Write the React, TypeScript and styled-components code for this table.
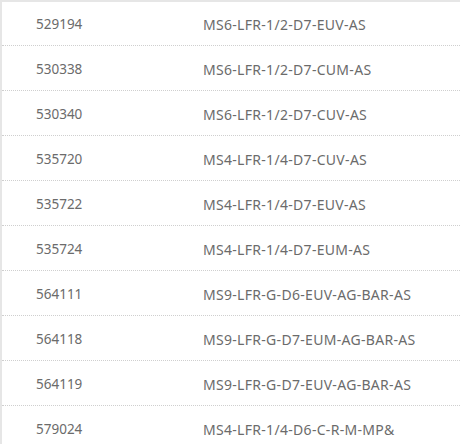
import React from "react";
import styled, { createGlobalStyle } from "styled-components";

const Global = createGlobalStyle`
  html, body { margin: 0; padding: 0; background: #fff; }
  body { font-family: "Noto Sans", "Open Sans", sans-serif; }
`;

const Panel = styled.div`
  width: 460px;
  height: 444px;
  overflow: hidden;
  border-top: 2px solid #e6e6e6;
  border-left: 2px solid #e6e6e6;
  box-sizing: border-box;
  background: #fff;
`;

const Row = styled.div`
  display: grid;
  grid-template-columns: 201px 1fr;
  height: 45px;
  padding-top: 3px;
  align-items: center;
  border-bottom: 1px dotted #cfcfcf;
  box-sizing: border-box;
  &:first-child { height: 44px; }
`;

const IdCell = styled.div`
  padding-left: 34px;
  font-size: 13.5px;
  color: #6b6b6b;
  white-space: nowrap;
  line-height: 1;
`;

const CodeCell = styled.div`
  font-size: 14px;
  letter-spacing: 0.3px;
  color: #6b6b6b;
  white-space: nowrap;
  line-height: 1;
`;

const rows: [string, string][] = [
  ["529194", "MS6-LFR-1/2-D7-EUV-AS"],
  ["530338", "MS6-LFR-1/2-D7-CUM-AS"],
  ["530340", "MS6-LFR-1/2-D7-CUV-AS"],
  ["535720", "MS4-LFR-1/4-D7-CUV-AS"],
  ["535722", "MS4-LFR-1/4-D7-EUV-AS"],
  ["535724", "MS4-LFR-1/4-D7-EUM-AS"],
  ["564111", "MS9-LFR-G-D6-EUV-AG-BAR-AS"],
  ["564118", "MS9-LFR-G-D7-EUM-AG-BAR-AS"],
  ["564119", "MS9-LFR-G-D7-EUV-AG-BAR-AS"],
  ["579024", "MS4-LFR-1/4-D6-C-R-M-MP&"],
];

export default function App() {
  return (
    <>
      <Global />
      <Panel>
        {rows.map(([id, code]) => (
          <Row key={id}>
            <IdCell>{id}</IdCell>
            <CodeCell>{code}</CodeCell>
          </Row>
        ))}
      </Panel>
    </>
  );
}
